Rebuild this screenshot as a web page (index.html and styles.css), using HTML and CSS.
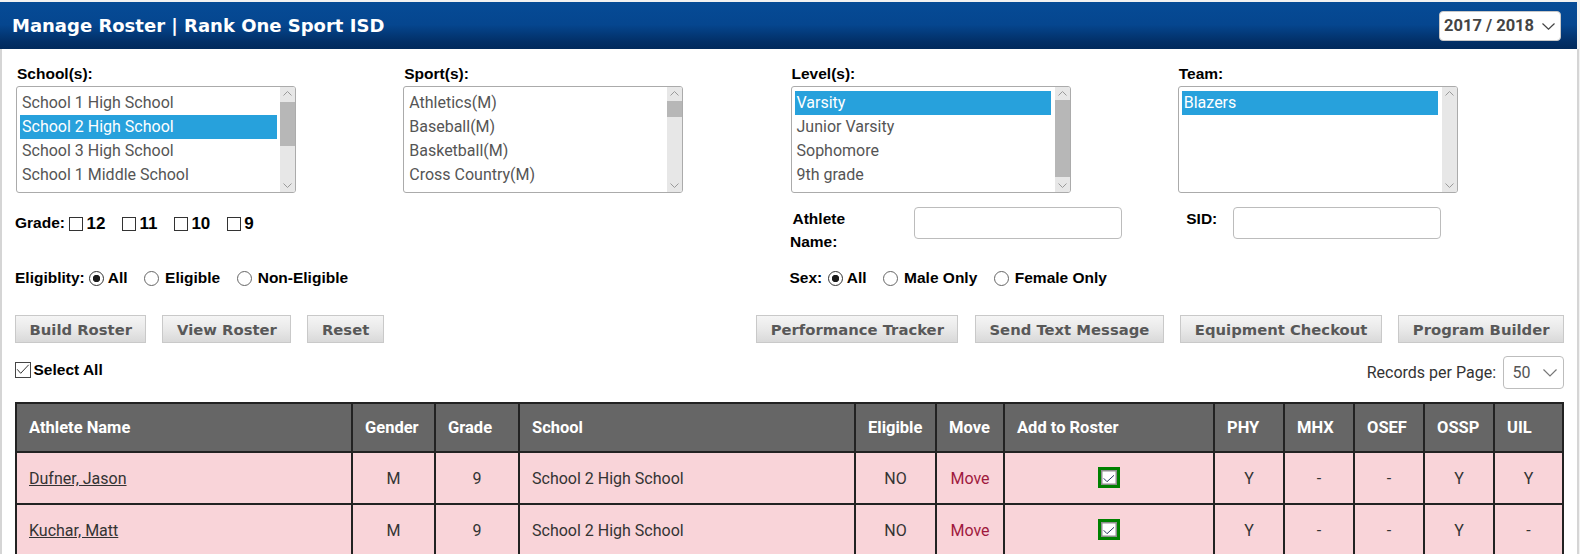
FILE: index.html
```html
<!DOCTYPE html>
<html lang="en">
<head>
<meta charset="utf-8">
<title>Manage Roster | Rank One Sport ISD</title>
<link rel="stylesheet" href="styles.css">
</head>
<body>
<div class="page">
  <header class="titlebar">
    <h1 class="title">Manage Roster | Rank One Sport ISD</h1>
    <div class="year-select">
      <span class="year-value">2017 / 2018</span>
      <svg class="chev chev-year" viewBox="0 0 13 7"><polyline points="0.5,0.5 6.5,6.2 12.5,0.5"/></svg>
    </div>
  </header>

  <main class="content">
    <section class="filters">
      <div class="field">
        <div class="field-label">School(s):</div>
        <div class="listbox">
          <ul class="options">
            <li>School 1 High School</li>
            <li class="sel">School 2 High School</li>
            <li>School 3 High School</li>
            <li>School 1 Middle School</li>
          </ul>
          <div class="scrollbar">
            <div class="sb-btn"><svg class="sb-arrow" viewBox="0 0 9 5"><polyline points="0.5,4.5 4.5,0.5 8.5,4.5"/></svg></div>
            <div class="sb-track"><div class="sb-thumb" style="margin-top:2px;height:44px"></div></div>
            <div class="sb-btn"><svg class="sb-arrow" viewBox="0 0 9 5"><polyline points="0.5,0.5 4.5,4.5 8.5,0.5"/></svg></div>
          </div>
        </div>
      </div>
      <div class="field">
        <div class="field-label">Sport(s):</div>
        <div class="listbox">
          <ul class="options">
            <li>Athletics(M)</li>
            <li>Baseball(M)</li>
            <li>Basketball(M)</li>
            <li>Cross Country(M)</li>
          </ul>
          <div class="scrollbar">
            <div class="sb-btn"><svg class="sb-arrow" viewBox="0 0 9 5"><polyline points="0.5,4.5 4.5,0.5 8.5,4.5"/></svg></div>
            <div class="sb-track"><div class="sb-thumb" style="margin-top:1px;height:16px"></div></div>
            <div class="sb-btn"><svg class="sb-arrow" viewBox="0 0 9 5"><polyline points="0.5,0.5 4.5,4.5 8.5,0.5"/></svg></div>
          </div>
        </div>
      </div>
      <div class="field">
        <div class="field-label">Level(s):</div>
        <div class="listbox">
          <ul class="options">
            <li class="sel">Varsity</li>
            <li>Junior Varsity</li>
            <li>Sophomore</li>
            <li>9th grade</li>
          </ul>
          <div class="scrollbar">
            <div class="sb-btn"><svg class="sb-arrow" viewBox="0 0 9 5"><polyline points="0.5,4.5 4.5,0.5 8.5,4.5"/></svg></div>
            <div class="sb-track"><div class="sb-thumb" style="margin-top:0px;height:77px"></div></div>
            <div class="sb-btn"><svg class="sb-arrow" viewBox="0 0 9 5"><polyline points="0.5,0.5 4.5,4.5 8.5,0.5"/></svg></div>
          </div>
        </div>
      </div>
      <div class="field">
        <div class="field-label">Team:</div>
        <div class="listbox">
          <ul class="options">
            <li class="sel">Blazers</li>
          </ul>
          <div class="scrollbar">
            <div class="sb-btn"><svg class="sb-arrow" viewBox="0 0 9 5"><polyline points="0.5,4.5 4.5,0.5 8.5,4.5"/></svg></div>
            <div class="sb-track"></div>
            <div class="sb-btn"><svg class="sb-arrow" viewBox="0 0 9 5"><polyline points="0.5,0.5 4.5,4.5 8.5,0.5"/></svg></div>
          </div>
        </div>
      </div>
    </section>

    <section class="criteria criteria-top">
      <div class="grade">
        <span class="crit-label">Grade:</span>
        <label class="grade-opt first"><span class="cb"></span><span class="grade-num">12</span></label>
        <label class="grade-opt"><span class="cb"></span><span class="grade-num">11</span></label>
        <label class="grade-opt"><span class="cb"></span><span class="grade-num">10</span></label>
        <label class="grade-opt"><span class="cb"></span><span class="grade-num">9</span></label>
      </div>
      <div class="text-field athlete">
        <label class="text-label athlete-label">Athlete Name:</label>
        <input class="text-input" type="text">
      </div>
      <div class="text-field sid">
        <label class="text-label sid-label">SID:</label>
        <input class="text-input" type="text">
      </div>
    </section>

    <section class="criteria criteria-bottom">
      <div class="choice-group eligibility">
        <span class="crit-label">Eligiblity:</span>
        <label class="choice first"><span class="rb rb-on"></span><span>All</span></label>
        <label class="choice"><span class="rb"></span><span>Eligible</span></label>
        <label class="choice"><span class="rb"></span><span>Non-Eligible</span></label>
      </div>
      <div class="choice-group sex">
        <span class="crit-label">Sex:</span>
        <label class="choice first"><span class="rb rb-on"></span><span>All</span></label>
        <label class="choice"><span class="rb"></span><span>Male Only</span></label>
        <label class="choice"><span class="rb"></span><span>Female Only</span></label>
      </div>
    </section>

    <section class="actions">
      <div class="btn-group">
        <button class="btn">Build Roster</button>
        <button class="btn">View Roster</button>
        <button class="btn">Reset</button>
      </div>
      <div class="btn-group btn-group-right">
        <button class="btn">Performance Tracker</button>
        <button class="btn">Send Text Message</button>
        <button class="btn">Equipment Checkout</button>
        <button class="btn">Program Builder</button>
      </div>
    </section>

    <section class="list-tools">
      <label class="select-all">
        <span class="cb cb-lg"><svg class="tick" viewBox="0 0 14 14"><polyline points="1.2,6.3 4.7,10.3 12.7,1.8"/></svg></span>
        <span>Select All</span>
      </label>
      <div class="records">
        <span class="records-label">Records per Page:</span>
        <div class="records-select">
          <span>50</span>
          <svg class="chev chev-rec" viewBox="0 0 14 8"><polyline points="0.5,0.5 7,7 13.5,0.5"/></svg>
        </div>
      </div>
    </section>

    <table class="roster">
      <colgroup>
        <col class="w-name"><col class="w-gender"><col class="w-grade"><col class="w-school"><col class="w-elig"><col class="w-move"><col class="w-add"><col class="w-flag"><col class="w-flag"><col class="w-flag"><col class="w-flag"><col class="w-uil">
      </colgroup>
      <thead>
        <tr>
          <th>Athlete Name</th><th>Gender</th><th>Grade</th><th>School</th><th>Eligible</th><th>Move</th><th>Add to Roster</th><th>PHY</th><th>MHX</th><th>OSEF</th><th>OSSP</th><th>UIL</th>
        </tr>
      </thead>
      <tbody>
        <tr>
          <td class="left"><a class="athlete-link" href="#">Dufner, Jason</a></td>
          <td>M</td><td>9</td>
          <td class="left">School 2 High School</td>
          <td>NO</td>
          <td><a class="move-link" href="#">Move</a></td>
          <td><span class="roster-check"><svg class="tick" viewBox="0 0 16 15"><polyline points="2.7,8.3 6,11.7 13,5.3"/></svg></span></td>
          <td>Y</td><td>-</td><td>-</td><td>Y</td><td>Y</td>
        </tr>
        <tr>
          <td class="left"><a class="athlete-link" href="#">Kuchar, Matt</a></td>
          <td>M</td><td>9</td>
          <td class="left">School 2 High School</td>
          <td>NO</td>
          <td><a class="move-link" href="#">Move</a></td>
          <td><span class="roster-check"><svg class="tick" viewBox="0 0 16 15"><polyline points="2.7,8.3 6,11.7 13,5.3"/></svg></span></td>
          <td>Y</td><td>-</td><td>-</td><td>Y</td><td>-</td>
        </tr>
      </tbody>
    </table>
  </main>
</div>
</body>
</html>
```

FILE: styles.css
```css
* { box-sizing: border-box; }

html, body {
  margin: 0;
  padding: 0;
  height: 100%;
  overflow: hidden;
  background: #ffffff;
}

body {
  font-family: Roboto, "Liberation Sans", Arial, sans-serif;
  color: #333;
}

.page {
  padding-top: 2px;
  background: #f1f1f1;
  min-height: 100%;
}

/* ---------- title bar ---------- */
.titlebar {
  width: 1577px;
  height: 47px;
  display: flex;
  align-items: center;
  justify-content: space-between;
  padding: 0 16px 0 12px;
  background: linear-gradient(to bottom, #064b96 0%, #05468f 48%, #022f66 85%, #012a5c 100%);
}

.title {
  margin: 0;
  font: bold 18px "DejaVu Sans", Verdana, sans-serif;
  color: #ffffff;
  white-space: nowrap;
}

.year-select {
  width: 122px;
  height: 30px;
  display: flex;
  align-items: center;
  justify-content: space-between;
  padding: 0 5px 0 4px;
  background: #fff;
  border: 1px solid #c8c8c8;
  border-radius: 4px;
}

.year-value {
  font: bold 16.5px Roboto, "Liberation Sans", sans-serif;
  color: #444;
}

.chev {
  fill: none;
  stroke-width: 1.2;
}

.chev-year {
  width: 13px;
  height: 7px;
  stroke: #444;
  margin-top: 1px;
}

/* ---------- content ---------- */
.content {
  width: 1579px;
  min-height: calc(100vh - 49px);
  background: #fff;
  border-left: 2px solid #d5d5d5;
  border-right: 2px solid #d5d5d5;
  padding: 16px 13px 0 13px;
}

.filters {
  display: grid;
  grid-template-columns: repeat(4, 1fr);
}

.field-label {
  font: bold 15.5px "Liberation Sans", Arial, sans-serif;
  line-height: 18px;
  color: #000;
  padding-left: 2px;
  margin-bottom: 3px;
}

.listbox {
  width: 280px;
  height: 107px;
  margin-left: 1px;
  display: flex;
  border: 1px solid #ababab;
  border-radius: 3px;
  overflow: hidden;
  background: #fff;
}

.options {
  flex: 1;
  margin: 0;
  padding: 4px 3.5px 0 3px;
  list-style: none;
}

.options li {
  height: 24px;
  line-height: 24px;
  padding-left: 2px;
  font-size: 16px;
  color: #555;
  white-space: nowrap;
}

.options li.sel {
  background: #27a1dc;
  color: #fff;
}

.scrollbar {
  width: 15px;
  display: flex;
  flex-direction: column;
  background: #e7e7e7;
}

.sb-btn {
  height: 13px;
  display: flex;
  align-items: center;
  justify-content: center;
}

.sb-arrow {
  width: 9px;
  height: 5px;
  fill: none;
  stroke: #9a9a9a;
  stroke-width: 1;
}

.sb-track {
  flex: 1;
}

.sb-thumb {
  background: #b7b7b7;
}

/* ---------- criteria rows ---------- */
.criteria {
  display: grid;
  grid-template-columns: repeat(4, 1fr);
}

.criteria-top {
  margin-top: 14px;
  align-items: start;
}

.criteria-bottom {
  margin-top: 15px;
}

.crit-label,
.text-label,
.choice,
.select-all {
  font: bold 15.5px "Liberation Sans", Arial, sans-serif;
  color: #000;
}

.grade {
  grid-column: 1 / 3;
  height: 32px;
  display: flex;
  align-items: center;
}

.grade-opt {
  display: flex;
  align-items: center;
  margin-left: 17px;
  margin-top: 2px;
}

.grade-opt.first {
  margin-left: 4.5px;
}

.grade-num {
  font: bold 17px "Liberation Sans", Arial, sans-serif;
  color: #000;
}

.cb {
  display: inline-block;
  width: 14px;
  height: 14px;
  border: 1px solid #333;
  background: #fff;
  margin-right: 3px;
}

.text-field {
  display: flex;
  align-items: flex-start;
}

.text-label {
  line-height: 23px;
}

.athlete-label {
  width: 124.5px;
  padding-left: 0.5px;
  padding-right: 60px;
  text-indent: 2.5px;
}

.sid-label {
  width: 56.5px;
  padding-left: 9.5px;
}

.text-input {
  width: 208px;
  height: 32px;
  margin: 0;
  border: 1px solid #bcbcbc;
  border-radius: 4px;
  background: #fff;
}

.choice-group {
  display: flex;
  align-items: center;
  height: 20px;
}

.eligibility {
  grid-column: 1 / 3;
}

.sex {
  grid-column: 3 / 5;
}

.eligibility .crit-label {
  margin-right: 4.5px;
}

.sex .crit-label {
  margin-right: 6px;
}

.choice {
  display: flex;
  align-items: center;
  margin-left: 16.5px;
}

.choice.first {
  margin-left: 0;
}

.rb {
  display: inline-block;
  width: 15px;
  height: 15px;
  border-radius: 50%;
  border: 1px solid #666;
  background: #fff;
  margin-right: 6px;
}

.choice.first .rb {
  margin-right: 3.5px;
}

.rb-on {
  border-color: #333;
  background: radial-gradient(circle, #1b1b1b 0 3.4px, #ffffff 4px);
}

/* ---------- buttons ---------- */
.actions {
  display: flex;
  justify-content: space-between;
  margin-top: 27px;
}

.btn-group {
  display: flex;
  gap: 16px;
}

.btn-group-right {
  gap: 16.5px;
}

.btn {
  height: 28px;
  margin: 0;
  padding: 0 13.5px;
  border: 1px solid #c9c9c9;
  border-radius: 0;
  background: linear-gradient(to bottom, #f5f5f5 0%, #e9e9e9 50%, #d9d9d9 100%);
  font: bold 14.8px "DejaVu Sans", Verdana, sans-serif;
  color: #585858;
  white-space: nowrap;
}

/* ---------- list tools ---------- */
.list-tools {
  display: flex;
  justify-content: space-between;
  align-items: flex-start;
  margin-top: 13px;
}

.select-all {
  display: flex;
  align-items: center;
  margin-top: 5px;
}

.cb-lg {
  width: 16px;
  height: 16px;
  border-color: #444;
  margin-right: 2.5px;
  display: flex;
}

.tick {
  width: 100%;
  height: 100%;
  fill: none;
  stroke: #333;
  stroke-width: 1;
}

.records {
  display: flex;
  align-items: center;
}

.records-label {
  font-size: 16px;
  color: #333;
  margin-right: 7px;
}

.records-select {
  width: 61px;
  height: 33px;
  display: flex;
  align-items: center;
  justify-content: space-between;
  padding: 0 6.5px 0 8.5px;
  border: 1px solid #bdbdbd;
  border-radius: 4px;
  font-size: 16px;
  color: #555;
}

.chev-rec {
  width: 14px;
  height: 8px;
  stroke: #777;
}

/* ---------- table ---------- */
.roster {
  width: 1549px;
  margin-top: 13px;
  table-layout: fixed;
  border-collapse: separate;
  border-spacing: 0;
  border-top: 2px solid #222;
  border-left: 2px solid #222;
}

.w-name { width: 336px; }
.w-gender { width: 83px; }
.w-grade { width: 84px; }
.w-school { width: 336px; }
.w-elig { width: 81px; }
.w-move { width: 68px; }
.w-add { width: 210px; }
.w-flag { width: 70px; }
.w-uil { width: 69px; }

.roster th,
.roster td {
  box-sizing: content-box;
  padding: 0 12px;
  border-right: 2px solid #222;
  border-bottom: 2px solid #222;
  white-space: nowrap;
}

.roster th {
  height: 47px;
  background: #666;
  color: #fff;
  font: bold 16.5px Roboto, "Liberation Sans", sans-serif;
  text-align: left;
}

.roster td {
  height: 50px;
  background: #f9d4d9;
  color: #333;
  font-size: 16px;
  text-align: center;
}

.roster td.left {
  text-align: left;
}

.athlete-link {
  color: #333;
  text-decoration: underline;
}

.move-link {
  color: #a0193e;
  text-decoration: none;
}

.roster-check {
  display: inline-flex;
  width: 22px;
  height: 21px;
  border: 3px solid #008000;
  background: #fff;
  box-shadow: inset 0 0 0 1.5px #8e8e8e;
  vertical-align: middle;
  margin-top: -3px;
}

.roster-check .tick {
  stroke: #2b3a63;
}
```
